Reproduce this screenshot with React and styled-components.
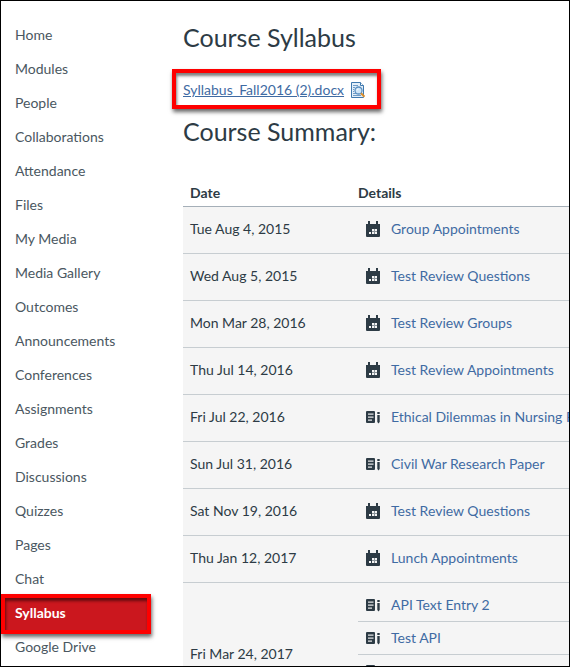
import React from "react";
import styled, { createGlobalStyle, css } from "styled-components";

const GlobalStyle = createGlobalStyle`
  *, *::before, *::after { box-sizing: border-box; }
  body {
    margin: 0;
    background: #fff;
    color: #2d3b45;
    font-family: Lato, "Liberation Sans", sans-serif;
    font-size: 14px;
    line-height: 20px;
  }
  svg { flex-shrink: 0; }
`;

const Page = styled.div`
  display: flex;
  height: 100vh;
  overflow: hidden;
  border: 1px solid #000;
`;

const highlight = css`
  border: 4px solid #fe0000;
  box-shadow: 1px 3px 4px rgba(0, 0, 0, 0.6), inset 1px 3px 3px rgba(0, 0, 0, 0.5);
`;

const Nav = styled.nav`
  flex: 0 0 150px;
  padding-top: 17px;
`;

const NavList = styled.ul`
  list-style: none;
  margin: 0;
  padding: 0;
`;

const NavLink = styled.a`
  position: relative;
  display: block;
  padding: 7px 14px;
  color: #4a5761;
  text-decoration: none;

  &[aria-current="page"] {
    background: #cb171e;
    color: #fff;
    font-weight: 700;
  }

  &[aria-current="page"]::after {
    content: "";
    position: absolute;
    inset: -2px 0 -4px;
    ${highlight}
  }
`;

const Main = styled.main`
  flex: 1;
  min-width: 0;
  overflow: hidden;
  padding: 20px 0 0 32px;
`;

const Title = styled.h2`
  margin: 0;
  font-size: 25px;
  line-height: 32px;
  font-weight: 400;
`;

const FileBox = styled.div`
  display: flex;
  align-items: center;
  gap: 6px;
  width: max-content;
  height: 40px;
  margin: 16px 0 6px -11px;
  padding: 2px 11px 0 7px;
  ${highlight}
`;

const FileLink = styled.a`
  color: #3f6ba3;
  text-decoration: underline;
`;

const PreviewButton = styled.button`
  display: flex;
  padding: 0;
  border: 0;
  background: none;
`;

const Table = styled.table`
  table-layout: fixed;
  width: 100%;
  margin-top: 32px;
  border-collapse: separate;
  border-spacing: 0;
  white-space: nowrap;
`;

const HeadCell = styled.th`
  height: 28px;
  padding: 0 7px;
  border-bottom: 1px solid #a5afb8;
  font-weight: 700;
  text-align: left;
  width: ${(p) => (p.$date ? "168px" : "auto")};
`;

const Cell = styled.td`
  height: 47px;
  padding: ${(p) => (p.$group ? "5px 0 6px 7px" : "0 0 2px 7px")};
  border-bottom: 1px solid #c7cdd1;
  background: #f5f5f5;
`;

const Entry = styled.div`
  display: flex;
  align-items: center;
  gap: 10px;
  height: 33px;
  padding-left: 7px;

  & + & {
    border-top: 1px solid #c7cdd1;
  }
`;

const EntryLink = styled.a`
  color: #3f6ba3;
  text-decoration: none;
`;

const CalendarIcon = () => (
  <svg width="16" height="16" viewBox="0 0 16 16" aria-hidden="true">
    <path fill="#2d3b45" d="M1 3h2V0h2v3h6V0h2v3h2v12a1 1 0 0 1-1 1H2a1 1 0 0 1-1-1z" />
    <path fill="#8b949a" d="M7 8h5v5H7z" />
    <path
      fill="#f5f5f5"
      d="M7 8h2v2H7zM10 8h2v2h-2zM4 11h2v2H4zM7 11h2v2H7zM10 11h2v2h-2z"
    />
  </svg>
);

const AssignmentIcon = () => (
  <svg width="16" height="16" viewBox="0 0 16 16" aria-hidden="true">
    <path fill="#2d3b45" d="M2 2h7a1 1 0 0 1 1 1v10a1 1 0 0 1-1 1H2a1 1 0 0 1-1-1V3a1 1 0 0 1 1-1z" />
    <path fill="#e3e5e6" d="M3 4.500h5.500v1.200H3zM3 7.500h5.500v1.200H3zM3 10.500h4v1.200H3z" />
    <path fill="#2d3b45" d="M12.300 3h2.400v2h-2.400zM12.300 6h2.400v7l-1.200 1.500-1.200-1.500z" />
  </svg>
);

const PreviewIcon = () => (
  <svg width="16" height="16" viewBox="0 0 16 16" aria-hidden="true">
    <path d="M1.500.5h9l3 3v12h-12z" fill="#e3eef8" stroke="#3e78ae" />
    <path d="M10.500.5v3h3" fill="#fff" stroke="#3e78ae" />
    <path d="M3 3.500h5M3 5.500h2M3 7.500h1M3 9.500h1M3 11.500h3M3 13.500h8" stroke="#6f9cc7" />
    <circle cx="8.500" cy="8.500" r="3.500" fill="#cfe5f7" stroke="#5a8fc0" strokeWidth="1.300" />
    <path d="M7 8.500a1.500 1.500 0 0 1 1.500-1.500" stroke="#fff" fill="none" />
    <path d="M11 11.200l3.500 3.500" stroke="#d98d2b" strokeWidth="2" />
  </svg>
);

const navItems = [
  "Home", "Modules", "People", "Collaborations", "Attendance", "Files",
  "My Media", "Media Gallery", "Outcomes", "Announcements", "Conferences",
  "Assignments", "Grades", "Discussions", "Quizzes", "Pages", "Chat",
  "Syllabus", "Google Drive",
];

const event = (title) => ({ Icon: CalendarIcon, title });
const assignment = (title) => ({ Icon: AssignmentIcon, title });

const summary = [
  { date: "Tue Aug 4, 2015", entries: [event("Group Appointments")] },
  { date: "Wed Aug 5, 2015", entries: [event("Test Review Questions")] },
  { date: "Mon Mar 28, 2016", entries: [event("Test Review Groups")] },
  { date: "Thu Jul 14, 2016", entries: [event("Test Review Appointments")] },
  { date: "Fri Jul 22, 2016", entries: [assignment("Ethical Dilemmas in Nursing P")] },
  { date: "Sun Jul 31, 2016", entries: [assignment("Civil War Research Paper")] },
  { date: "Sat Nov 19, 2016", entries: [event("Test Review Questions")] },
  { date: "Thu Jan 12, 2017", entries: [event("Lunch Appointments")] },
  {
    date: "Fri Mar 24, 2017",
    entries: [assignment("API Text Entry 2"), assignment("Test API"), assignment(""), assignment("")],
  },
];

export default function App() {
  return (
    <>
      <GlobalStyle />
      <Page>
        <Nav aria-label="Course">
          <NavList>
            {navItems.map((item) => (
              <li key={item}>
                <NavLink href="#" aria-current={item === "Syllabus" ? "page" : undefined}>
                  {item}
                </NavLink>
              </li>
            ))}
          </NavList>
        </Nav>
        <Main>
          <Title>Course Syllabus</Title>
          <FileBox>
            <FileLink href="#">Syllabus_Fall2016 (2).docx</FileLink>
            <PreviewButton type="button" aria-label="Preview the document">
              <PreviewIcon />
            </PreviewButton>
          </FileBox>
          <Title>Course Summary:</Title>
          <Table>
            <thead>
              <tr>
                <HeadCell $date scope="col">Date</HeadCell>
                <HeadCell scope="col">Details</HeadCell>
              </tr>
            </thead>
            <tbody>
              {summary.map(({ date, entries }) => (
                <tr key={date}>
                  <Cell $group={entries.length > 1}>{date}</Cell>
                  <Cell $group={entries.length > 1}>
                    {entries.map(({ Icon, title }, i) => (
                      <Entry key={i}>
                        <Icon />
                        {title && <EntryLink href="#">{title}</EntryLink>}
                      </Entry>
                    ))}
                  </Cell>
                </tr>
              ))}
            </tbody>
          </Table>
        </Main>
      </Page>
    </>
  );
}
